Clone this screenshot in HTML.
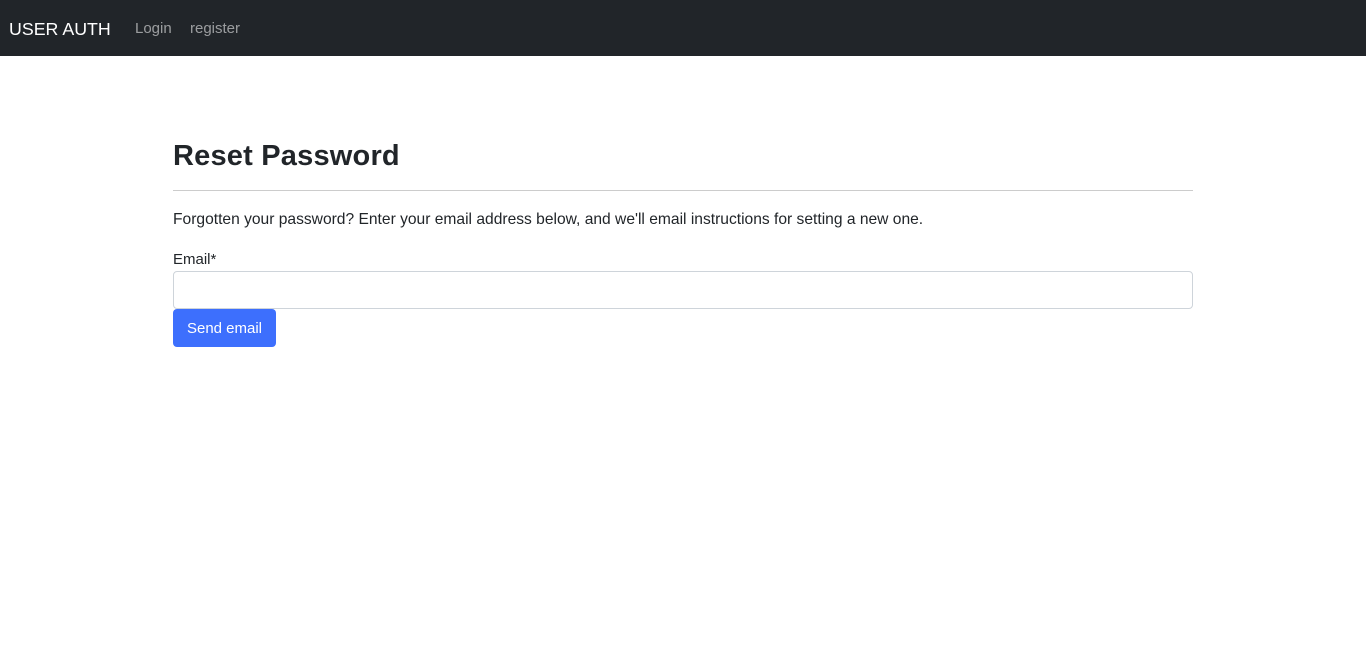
<!DOCTYPE html>
<html><head><style>
body{margin:0;font-family:"Liberation Sans",sans-serif;background:#fff;color:#212529}
.nav{height:56px;background:#212529;position:relative}
.brand{position:absolute;left:9px;top:19px;color:#fff;font-size:17.8px}
.l{position:absolute;top:20px;color:rgba(255,255,255,.55);font-size:15px}
.c{position:absolute;left:173px;width:1020px;top:0}
h1{position:absolute;top:140px;margin:0;font-size:29px;font-weight:bold;left:0;letter-spacing:0.2px}
hr{position:absolute;top:190px;left:0;width:1020px;margin:0;border:0;border-top:1px solid #ccc}
.p{position:absolute;top:211px;font-size:15.6px}
.lab{position:absolute;top:251px;font-size:15px}
.in{position:absolute;top:271px;left:0;width:1018px;height:36px;border:1px solid #ced4da;border-radius:4px}
.btn{position:absolute;top:309px;left:0;width:103px;height:38px;background:#3d6ffd;border-radius:4px;color:#fff;font-size:15px;line-height:40px;text-align:center}
</style></head><body>
<div class="nav"><span class="brand">USER AUTH</span><span class="l" style="left:135px">Login</span><span class="l" style="left:190px">register</span></div>
<div class="c">
<h1>Reset Password</h1><hr>
<div class="p">Forgotten your password? Enter your email address below, and we'll email instructions for setting a new one.</div>
<div class="lab">Email*</div>
<div class="in"></div>
<div class="btn">Send email</div>
</div>
</body></html>
